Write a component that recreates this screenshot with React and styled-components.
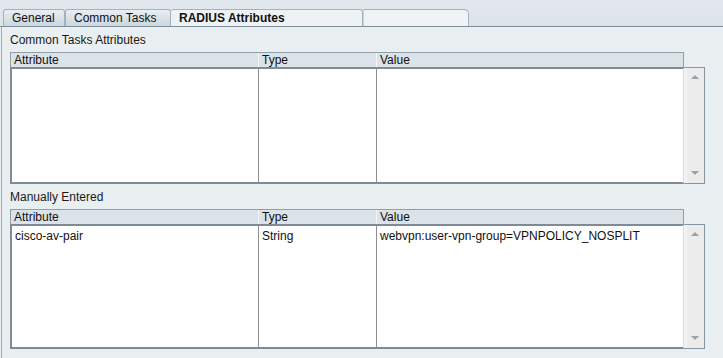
import React from 'react'
import styled, { createGlobalStyle } from 'styled-components'

const GlobalStyle = createGlobalStyle`
  html, body {
    margin: 0;
    padding: 0;
    background: #e9eef1;
    font-family: "Liberation Sans", Arial, sans-serif;
    font-size: 12px;
    color: #111;
  }
`

const tabs = [
  { label: 'General', width: 62 },
  { label: 'Common Tasks', width: 106 },
  { label: 'RADIUS Attributes', width: 192, active: true },
]

const cols = [
  { label: 'Attribute', width: 248 },
  { label: 'Type', width: 118 },
  { label: 'Value', width: null },
]

const manualRows = [
  ['cisco-av-pair', 'String', 'webvpn:user-vpn-group=VPNPOLICY_NOSPLIT'],
]

function Table({ rows, bodyHeight }) {
  return (
    <Grid>
      <Header>
        {cols.map((c, i) => (
          <HeadCell key={c.label} $w={c.width} $last={i === cols.length - 1}>
            {c.label}
          </HeadCell>
        ))}
      </Header>
      <Body $h={bodyHeight}>
        {cols.map((c, i) => (
          <Column key={c.label} $w={c.width} $last={i === cols.length - 1}>
            {rows.map((r, j) => (
              <Cell key={j}>{r[i]}</Cell>
            ))}
          </Column>
        ))}
      </Body>
      <Scroll>
        <Arrow $up />
        <Arrow />
      </Scroll>
    </Grid>
  )
}

export default function App() {
  return (
    <>
      <GlobalStyle />
      <TabBar>
        {tabs.map(t => (
          <Tab key={t.label} $w={t.width} $active={t.active}>
            {t.label}
          </Tab>
        ))}
        <TabFiller />
      </TabBar>
      <Panel>
        <Label>Common Tasks Attributes</Label>
        <Table rows={[]} bodyHeight={115} />
        <Label $second>Manually Entered</Label>
        <Table rows={manualRows} bodyHeight={123} />
      </Panel>
    </>
  )
}

const TabBar = styled.div`
  display: flex;
  align-items: flex-end;
  height: 26px;
  padding-left: 3px;
  background: linear-gradient(#e2e8ed, #dde4e9);
  border-bottom: 1px solid #7c8f9a;
`

const Tab = styled.div`
  box-sizing: border-box;
  width: ${p => p.$w}px;
  height: 17px;
  padding: 2px 0 0 8px;
  border: 1px solid #a3b3bd;
  border-bottom: none;
  border-left: ${p => (p.$active ? 'none' : '1px solid #a3b3bd')};
  border-radius: 3px 3px 0 0;
  background: ${p => (p.$active ? '#eef2f5' : 'linear-gradient(#e9eef2, #cbd6de)')};
  font-weight: ${p => (p.$active ? 'bold' : 'normal')};
  font-size: 12px;
  line-height: 13px;
  color: #111;
  white-space: nowrap;
  &:first-child {
    border-left: 1px solid #a3b3bd;
  }
`

const TabFiller = styled.div`
  box-sizing: border-box;
  width: 106px;
  height: 17px;
  border: 1px solid #a3b3bd;
  border-left: 1px solid #c7d2d9;
  border-bottom: none;
  border-radius: 0 5px 0 0;
  background: #eff3f6;
`

const Panel = styled.div`
  display: flex;
  flex-direction: column;
  align-items: flex-start;
  height: 331px;
  box-sizing: border-box;
  margin-left: 1px;
  padding: 6px 0 0 8px;
  border-left: 1px solid #9eabb3;
  background: #e9eef1;
`

const Label = styled.div`
  font-size: 12px;
  line-height: 14px;
  color: #1a1a1a;
  margin: ${p => (p.$second ? '6px 0 5px 0' : '0 0 5px 0')};
`

const Grid = styled.div`
  display: grid;
  grid-template-columns: 674px 21px;
  grid-template-rows: 15px auto;
`

const Header = styled.div`
  grid-column: 1;
  grid-row: 1;
  display: flex;
  box-sizing: border-box;
  height: 15px;
  border: 1px solid #8f9ea9;
  border-bottom: none;
  background: #dbe2e8;
`

const HeadCell = styled.div`
  box-sizing: border-box;
  ${p => (p.$w ? `width: ${p.$w}px;` : 'flex: 1;')}
  padding-left: 3px;
  font-size: 12px;
  line-height: 14px;
  color: #111;
  border-right: ${p => (p.$last ? 'none' : '1px solid #f4f7f9')};
`

const Body = styled.div`
  grid-column: 1;
  grid-row: 2;
  display: flex;
  box-sizing: border-box;
  height: ${p => p.$h + 2}px;
  border: 2px solid #7f8c96;
  border-right: 1px solid #d6dde2;
  background: #fff;
`

const Column = styled.div`
  box-sizing: border-box;
  ${p => (p.$w ? `width: ${p.$w - (p.$w === 248 ? 1 : 0)}px;` : 'flex: 1;')}
  border-right: ${p => (p.$last ? 'none' : '1px solid #8a9096')};
  padding: 3px 0 0 3px;
`

const Cell = styled.div`
  font-size: 12px;
  line-height: 14px;
  color: #111;
  white-space: nowrap;
`

const Scroll = styled.div`
  grid-column: 2;
  grid-row: 2;
  display: flex;
  flex-direction: column;
  justify-content: space-between;
  align-items: center;
  box-sizing: border-box;
  padding: 7px 0 8px;
  border: 1px solid #8696a1;
  border-left: none;
  background: linear-gradient(90deg, #f2f2f2 0 3px, #ececec 3px);
`

const Arrow = styled.div`
  width: 0;
  height: 0;
  margin-left: 2px;
  border-left: 4px solid transparent;
  border-right: 4px solid transparent;
  ${p => (p.$up ? 'border-bottom: 4px solid #9aa1a6;' : 'border-top: 4px solid #9aa1a6;')}
`
